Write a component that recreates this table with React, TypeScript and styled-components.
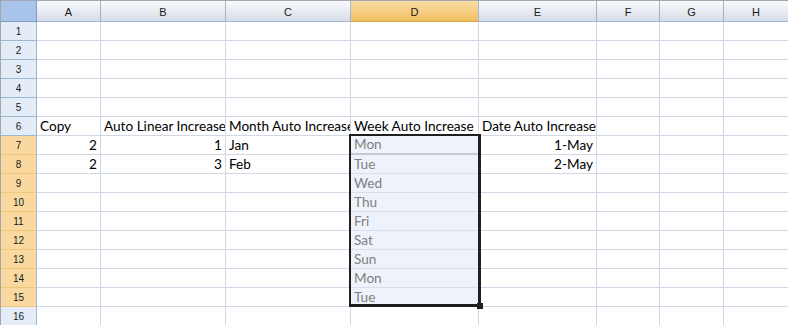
import React from "react";
import styled, { createGlobalStyle, css } from "styled-components";

const Global = createGlobalStyle`
  html, body { margin: 0; padding: 0; background: #fff; }
  * { box-sizing: border-box; }
`;

const COLS = [
  { key: "A", width: 64 },
  { key: "B", width: 125 },
  { key: "C", width: 125 },
  { key: "D", width: 128 },
  { key: "E", width: 118 },
  { key: "F", width: 63 },
  { key: "G", width: 64 },
  { key: "H", width: 65 },
];

const Sheet = styled.div`
  position: relative;
  display: grid;
  grid-template-columns: 36px ${COLS.map((c) => c.width + "px").join(" ")};
  grid-template-rows: 21px;
  grid-auto-rows: 19px;
  width: 788px;
  border-top: 1px solid #a3a7ad;
  border-left: 1px solid #a3a7ad;
`;

const Corner = styled.div`
  background: #a9c4ea;
  border-right: 1px solid #7e9cbd;
  border-bottom: 1px solid #7e9cbd;
`;

const ColHeader = styled.div<{ $selected?: boolean }>`
  display: flex;
  align-items: center;
  justify-content: center;
  font-family: "Liberation Sans", Arial, sans-serif;
  font-size: 11px;
  color: #1a1a1a;
  padding-top: 1px;
  border-right: 1px solid #9eb6ce;
  border-bottom: 1px solid #9eb6ce;
  background: linear-gradient(#f9fafc, #e6eaf1 55%, #d5dce8);
  ${(p) =>
    p.$selected &&
    css`
      background: linear-gradient(#f9dda6, #f5cd82 55%, #f1c15f);
      border-bottom-color: #d6a54c;
    `}
`;

const RowHeader = styled.div<{ $selected?: boolean }>`
  display: flex;
  align-items: center;
  justify-content: center;
  font-family: "Liberation Sans", Arial, sans-serif;
  font-size: 10px;
  color: #1a1a1a;
  background: #e4ecf7;
  border-right: 1px solid #9eb6ce;
  border-bottom: 1px solid #9eb6ce;
  ${(p) =>
    p.$selected &&
    css`
      background: #f9d99f;
      border-bottom-color: #f2c57a;
    `}
`;

const Cell = styled.div<{ $right?: boolean; $sel?: boolean; $active?: boolean }>`
  display: flex;
  align-items: flex-end;
  justify-content: ${(p) => (p.$right ? "flex-end" : "flex-start")};
  overflow: hidden;
  white-space: nowrap;
  padding: 0 3px 0 3px;
  font-family: Lato, "Open Sans", sans-serif;
  font-size: 13.6px;
  line-height: 18px;
  color: #000;
  background: #fff;
  border-right: 1px solid #d0d7e5;
  border-bottom: 1px solid #d0d7e5;
  ${(p) =>
    p.$sel &&
    css`
      background: #eef2fb;
      color: #7f7f7f;
      border-bottom-color: #d8deee;
    `}
  ${(p) =>
    p.$active &&
    css`
      border-bottom: 2px solid #c5c9d2;
    `}
`;

const Selection = styled.div`
  position: absolute;
  left: 348px;
  top: 133px;
  width: 132px;
  height: 173px;
  border: 2px solid #1f1f1f;
  border-right-width: 3px;
  border-bottom-width: 3px;
  pointer-events: none;
`;

const Handle = styled.div`
  position: absolute;
  right: -5px;
  bottom: -5px;
  width: 6px;
  height: 6px;
  background: #1f1f1f;
`;

type CellData = { v: string; right?: boolean };

const data: Record<number, Record<string, CellData>> = {
  6: {
    A: { v: "Copy" },
    B: { v: "Auto Linear Increase" },
    C: { v: "Month Auto Increase" },
    D: { v: "Week Auto Increase" },
    E: { v: "Date Auto Increase" },
  },
  7: {
    A: { v: "2", right: true },
    B: { v: "1", right: true },
    C: { v: "Jan" },
    D: { v: "Mon" },
    E: { v: "1-May", right: true },
  },
  8: {
    A: { v: "2", right: true },
    B: { v: "3", right: true },
    C: { v: "Feb" },
    D: { v: "Tue" },
    E: { v: "2-May", right: true },
  },
  9: { D: { v: "Wed" } },
  10: { D: { v: "Thu" } },
  11: { D: { v: "Fri" } },
  12: { D: { v: "Sat" } },
  13: { D: { v: "Sun" } },
  14: { D: { v: "Mon" } },
  15: { D: { v: "Tue" } },
};

const rows = Array.from({ length: 16 }, (_, i) => i + 1);
const isSelRow = (r: number) => r >= 7 && r <= 15;

export default function App() {
  return (
    <>
      <Global />
      <Sheet>
        <Corner />
        {COLS.map((c) => (
          <ColHeader key={c.key} $selected={c.key === "D"}>
            {c.key}
          </ColHeader>
        ))}
        {rows.map((r) => (
          <React.Fragment key={r}>
            <RowHeader $selected={isSelRow(r)}>{r}</RowHeader>
            {COLS.map((c) => {
              const d = data[r]?.[c.key];
              const sel = c.key === "D" && isSelRow(r);
              return (
                <Cell
                  key={c.key}
                  $right={d?.right}
                  $sel={sel}
                  $active={sel && r === 7}
                >
                  {d?.v ?? ""}
                </Cell>
              );
            })}
          </React.Fragment>
        ))}
        <Selection>
          <Handle />
        </Selection>
      </Sheet>
    </>
  );
}
